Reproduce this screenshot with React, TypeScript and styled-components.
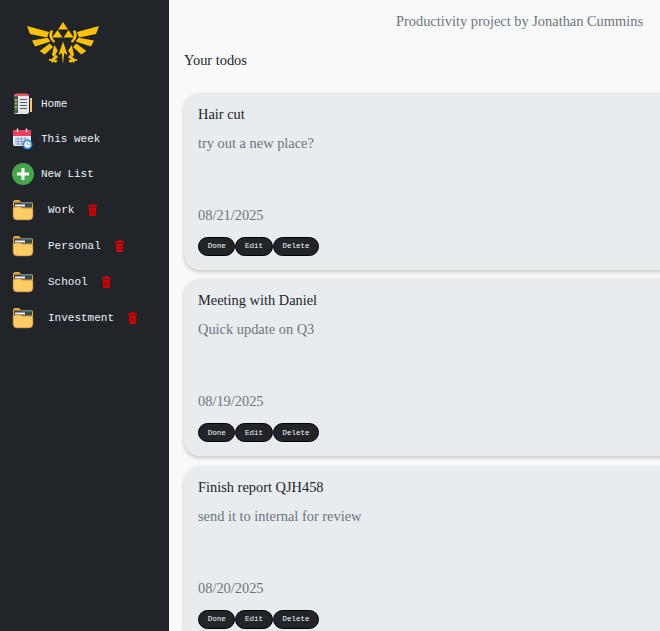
import React from 'react';
import styled, { createGlobalStyle } from 'styled-components';

const GlobalStyle = createGlobalStyle`
  html, body {
    margin: 0;
    padding: 0;
    height: 100%;
    overflow: hidden;
    background: #f8f9fa;
    font-family: "Liberation Serif", serif;
  }
`;

const Page = styled.div`
  display: flex;
  width: 660px;
  height: 631px;
  overflow: hidden;
`;

const Sidebar = styled.aside`
  flex: 0 0 169px;
  background: #212529;
  display: flex;
  flex-direction: column;
`;

const LogoWrap = styled.div`
  padding: 22px 0 0 27px;
  height: 64px;
  svg {
    display: block;
  }
`;

const NavList = styled.nav`
  display: flex;
  flex-direction: column;
`;

const NavItem = styled.div`
  display: grid;
  grid-template-columns: 21px 1fr;
  column-gap: 8px;
  align-items: center;
  height: 35px;
  padding-left: 12px;
  color: #e9f1fa;
  font: 11px "Liberation Mono", monospace;
`;

const FolderGroup = styled.div`
  display: flex;
  flex-direction: column;
  margin-top: 1px;
`;

const FolderItem = styled.div`
  display: flex;
  align-items: center;
  height: 36px;
  padding-left: 12px;
  color: #e9f1fa;
  font: 11px "Liberation Mono", monospace;
  svg {
    flex: none;
  }
`;

const FolderLabel = styled.span`
  margin-left: 14px;
  margin-right: 14px;
`;

const Main = styled.main`
  flex: 1;
  min-width: 0;
`;

const Credit = styled.div`
  height: 41px;
  padding: 12px 17px 0 0;
  box-sizing: border-box;
  text-align: right;
  font-size: 14.4px;
  line-height: 18px;
  color: #6c757d;
`;

const Heading = styled.h1`
  margin: 0;
  padding: 10px 0 0 15px;
  height: 51.7px;
  box-sizing: border-box;
  font-size: 14.4px;
  line-height: 18px;
  font-weight: 400;
  color: #212529;
`;

const CardList = styled.div`
  display: flex;
  flex-direction: column;
  gap: 9.5px;
  margin-left: 15px;
  width: 600px;
`;

const Card = styled.article`
  flex: none;
  height: 177px;
  box-sizing: border-box;
  padding: 12px 14px 0;
  background: #e9ecef;
  border-radius: 16px;
  box-shadow: 0 2px 4px rgba(0, 0, 0, 0.2);
`;

const CardTitle = styled.div`
  font-size: 14.4px;
  line-height: 18px;
  color: #212529;
`;

const CardText = styled.div`
  margin-top: 11px;
  height: 72px;
  font-size: 14.4px;
  line-height: 18px;
  color: #6c757d;
`;

const CardDate = styled.div`
  font-size: 14.4px;
  line-height: 18px;
  color: #6c757d;
`;

const Actions = styled.div`
  display: flex;
  margin-top: 13px;
`;

const ActionButton = styled.button`
  height: 19px;
  padding: 0 8.7px;
  border: 1px solid #000;
  border-radius: 9.5px;
  background: #212529;
  color: #f8f9fa;
  font: 7.5px "Liberation Mono", monospace;
`;

const Logo = () => {
  const half = (
    <>
      <polygon points="0,4 22,10 20,15.500 3,12" />
      <polygon points="5,18.500 20.500,15.800 23.500,19.500 8,24.500" />
      <polygon points="12.700,29 22.700,21.500 26,25 17.700,32.500" />
      <polygon points="25,33 27.200,23 30.800,28.500 27,35" />
      <path d="M24 8 C21 12 22 17 27 21 L28 19 C25 16.500 24.500 12.500 26 9 Z" />
      <polygon points="22,37 24.500,37 29,32.500 31,35.500 27.500,37.500 30.500,38 29,41 26.500,39.500 25,41 24,38.500 22,39" />
    </>
  );
  return (
    <svg width="72" height="42" viewBox="0 0 72 42" fill="#fcc200">
      <polygon points="36,0 31,7.500 41,7.500" />
      <polygon points="30.500,8 25.300,15.600 35.500,15.600" />
      <polygon points="41.500,8 36.500,15.600 46.700,15.600" />
      <polygon points="36,19.500 31.500,33 34.800,31 36,42 37.200,31 40.500,33" />
      {half}
      <g transform="translate(72 0) scale(-1 1)">{half}</g>
    </svg>
  );
};

const NotebookIcon = () => (
  <svg width="21" height="22" viewBox="0 0 21 22">
    <rect x="2" y="1" width="15" height="20" rx="2.500" fill="#e3e6ee" />
    <path d="M5 0.500h9a3 3 0 0 1 3 2.500H2a3 3 0 0 1 3-2.500z" fill="#f0566a" />
    <rect x="2" y="3" width="4" height="17" rx="1" fill="#4a5348" />
    <path d="M8 6.500h7M8 9.500h7M8 12.500h7M8 15.500h7" stroke="#5a606c" strokeWidth="1" />
    <path d="M4 6v11" stroke="#9bd068" strokeWidth="2" strokeDasharray="2 1.500" />
    <rect x="18" y="5" width="2" height="14" fill="#f5cb5c" />
  </svg>
);

const CalendarIcon = () => (
  <svg width="21" height="22" viewBox="0 0 21 22">
    <rect x="1" y="2" width="18" height="16" rx="2" fill="#e4e9f7" />
    <path d="M3 2h14a2 2 0 0 1 2 2v4H1V4a2 2 0 0 1 2-2z" fill="#f0405a" />
    <path d="M5.500 0.500v3.500M14.500 0.500v3.500" stroke="#f2f2f2" strokeWidth="1.400" />
    <path
      d="M3 11h13M3 13.500h13M3 16h10M6 9v8M9.500 9v8M13 9v5"
      stroke="#8a9bc4"
      strokeWidth="1"
    />
    <circle cx="15.500" cy="16.500" r="5" fill="#2f8fe8" />
    <circle cx="15.500" cy="16.500" r="3.200" fill="#f2f4f8" />
    <path d="M15.500 14.500v2.200h2" stroke="#d9a23a" strokeWidth="1" fill="none" />
  </svg>
);

const PlusIcon = () => (
  <svg width="22" height="22" viewBox="0 0 22 22">
    <circle cx="11" cy="11" r="11" fill="#43a649" />
    <path d="M11 5v12M5 11h12" stroke="#fff" strokeWidth="3" />
  </svg>
);

const FolderIcon = () => (
  <svg width="22" height="22" viewBox="0 0 22 22">
    <path d="M1 6V3.500A2.500 2.500 0 0 1 3.500 1H7l2 2h10a2 2 0 0 1 2 2v5H1z" fill="#e8a93c" />
    <path d="M2 3.500h18v5H2z" fill="#3f444a" />
    <path d="M9 3.500h11v1H9z" fill="#5d8a9a" />
    <path d="M3 5.500h10v2H3z" fill="#eef0f2" />
    <path
      d="M1 10c0-1 1-2 2-2l5-.5 2 1.500h9c1.200 0 2 .8 2 2v6a4 4 0 0 1-4 4H5a4 4 0 0 1-4-4z"
      fill="#ffcb63"
      stroke="#8a7038"
      strokeWidth=".6"
    />
  </svg>
);

const TrashIcon = () => (
  <svg width="9" height="12" viewBox="0 0 9 12">
    <path d="M2.800 1.200V.2h3.400v1H9v1.600H0V1.200z" fill="#dc0000" />
    <path d="M.8 3.400h7.400L7.600 12H1.400z" fill="#dc0000" />
    <path d="M3.200 5v5.500M5.800 5v5.500" stroke="#6d0a10" strokeWidth=".9" />
  </svg>
);

const folders = ['Work', 'Personal', 'School', 'Investment'];

const todos = [
  { title: 'Hair cut', text: 'try out a new place?', date: '08/21/2025' },
  { title: 'Meeting with Daniel', text: 'Quick update on Q3', date: '08/19/2025' },
  { title: 'Finish report QJH458', text: 'send it to internal for review', date: '08/20/2025' },
];

export default function App() {
  return (
    <Page>
      <GlobalStyle />
      <Sidebar>
        <LogoWrap>
          <Logo />
        </LogoWrap>
        <NavList>
          <NavItem>
            <NotebookIcon />
            <span>Home</span>
          </NavItem>
          <NavItem>
            <CalendarIcon />
            <span>This week</span>
          </NavItem>
          <NavItem>
            <PlusIcon />
            <span>New List</span>
          </NavItem>
          <FolderGroup>
            {folders.map((name) => (
              <FolderItem key={name}>
                <FolderIcon />
                <FolderLabel>{name}</FolderLabel>
                <TrashIcon />
              </FolderItem>
            ))}
          </FolderGroup>
        </NavList>
      </Sidebar>
      <Main>
        <Credit>Productivity project by Jonathan Cummins</Credit>
        <Heading>Your todos</Heading>
        <CardList>
          {todos.map((todo) => (
            <Card key={todo.title}>
              <CardTitle>{todo.title}</CardTitle>
              <CardText>{todo.text}</CardText>
              <CardDate>{todo.date}</CardDate>
              <Actions>
                <ActionButton>Done</ActionButton>
                <ActionButton>Edit</ActionButton>
                <ActionButton>Delete</ActionButton>
              </Actions>
            </Card>
          ))}
        </CardList>
      </Main>
    </Page>
  );
}
